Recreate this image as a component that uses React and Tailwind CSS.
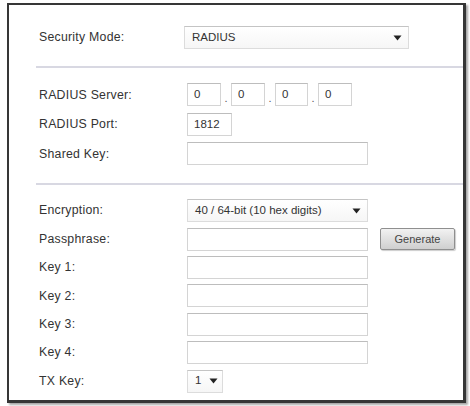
import React from 'react';

const Caret = () => (
  <svg width="9" height="6" viewBox="0 0 9 6" className="shrink-0">
    <path d="M0.5 0.5 L8.5 0.5 L4.5 5.5 Z" fill="#222" />
  </svg>
);

const Label = ({ children }) => (
  <div className="w-[148px] shrink-0 text-[12.3px] text-[#333] tracking-[0.25px]">{children}</div>
);

const Box = ({ className = '', children }) => (
  <div className={`h-[23px] border border-[#d4d4d4] border-t-[#bdbdbd] bg-white flex items-center px-[6px] text-[11.5px] text-[#333] ${className}`}>
    {children}
  </div>
);

const Select = ({ className = '', value }) => (
  <div className={`h-[23px] border border-[#dcdcdc] border-t-[#c4c4c4] bg-gradient-to-b from-white to-[#f6f6f6] flex items-center justify-between pl-[7px] pr-[6px] text-[11.5px] text-[#333] ${className}`}>
    <span>{value}</span>
    <Caret />
  </div>
);

const Row = ({ label, tall, children }) => (
  <div className={`flex items-center ${tall ? 'h-[29.5px]' : 'h-[28.4px]'}`}>
    <Label>{label}</Label>
    <div className="flex items-center">{children}</div>
  </div>
);

const Rule = () => <div className="ml-[27px] h-[2px] bg-[#d8d8e2]" />;

export default function App() {
  const font = { fontFamily: '"Liberation Sans", Arial, sans-serif' };
  return (
    <div className="w-[470px] h-[406px] bg-white pl-[7px] pt-[3px]" style={font}>
      <div className="w-[459px] h-[400px] border-2 border-r-[3px] border-b-[3px] border-[#363636] shadow-[2px_2px_2px_rgba(0,0,0,0.35)] bg-white pl-[30px] pt-[18px]">
        <div className="flex items-center h-[29px]">
          <Label>Security Mode:</Label>
          <Select className="w-[225px] -ml-[3px]" value="RADIUS" />
        </div>
        <div className="-ml-[30px] mt-[14px] mb-[12px]"><Rule /></div>

        <Row label="RADIUS Server:" tall>
          {['0', '0', '0', '0'].map((v, i) => (
            <div key={i} className="flex items-end">
              <Box className={i === 2 ? 'w-[33px]' : 'w-[34px]'}>{v}</Box>
              {i < 3 && <span className="w-[10px] text-center text-[11px] text-[#555] leading-none mb-[2px]">.</span>}
            </div>
          ))}
        </Row>
        <Row label="RADIUS Port:" tall>
          <Box className="w-[45px]">1812</Box>
        </Row>
        <Row label="Shared Key:" tall>
          <Box className="w-[181px]" />
        </Row>

        <div className="-ml-[30px] mt-[14px] mb-[12px]"><Rule /></div>

        <Row label="Encryption:">
          <Select className="w-[181px]" value="40 / 64-bit (10 hex digits)" />
        </Row>
        <Row label="Passphrase:">
          <Box className="w-[181px]" />
          <button className="ml-[12px] h-[22px] w-[75px] border border-[#8f8f8f] rounded-[2px] bg-gradient-to-b from-[#f2f2f2] to-[#cfcfcf] text-[11px] text-[#444] shadow-[1px_1px_1px_rgba(0,0,0,0.2)]">
            Generate
          </button>
        </Row>
        <Row label="Key 1:">
          <Box className="w-[181px]" />
        </Row>
        <Row label="Key 2:">
          <Box className="w-[181px]" />
        </Row>
        <Row label="Key 3:">
          <Box className="w-[181px]" />
        </Row>
        <Row label="Key 4:">
          <Box className="w-[181px]" />
        </Row>
        <Row label="TX Key:">
          <Select className="w-[36px] !pl-[7px] !pr-[4px]" value="1" />
        </Row>
      </div>
    </div>
  );
}
